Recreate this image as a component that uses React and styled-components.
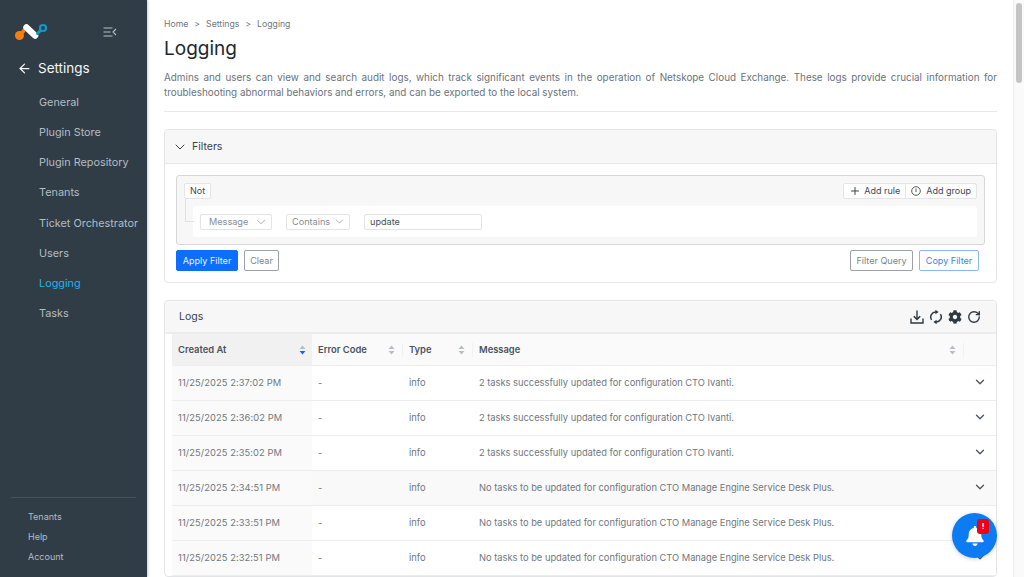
import styled, { createGlobalStyle } from "styled-components";
import { FaBell, FaCog } from "react-icons/fa";
import { LuChevronDown, LuPlus, LuArrowLeft, LuRotateCw } from "react-icons/lu";

const GlobalStyle = createGlobalStyle`
  html, body {
    margin: 0;
    height: 100%;
    overflow: hidden;
    background: #fff;
    font-family: Inter, "Liberation Sans", sans-serif;
    color: #5c6670;
  }
  * { box-sizing: border-box; }
`;

const Page = styled.div`
  display: flex;
  width: 1024px;
  height: 577px;
  overflow: hidden;
  position: relative;
`;

const Sidebar = styled.aside`
  width: 147px;
  flex: none;
  background: #303d47;
  display: flex;
  flex-direction: column;
  box-shadow: 1px 0 2px rgba(0, 0, 0, 0.2);
`;

const SideTop = styled.div`
  display: flex;
  align-items: center;
  justify-content: space-between;
  height: 54px;
  padding: 10px 30px 0 14px;
`;

const Back = styled.div`
  display: flex;
  align-items: center;
  gap: 6px;
  height: 28px;
  padding-left: 17px;
  color: #f4f6f7;
  font-size: 13.5px;
  font-weight: 400;
`;

const Nav = styled.nav`
  display: flex;
  flex-direction: column;
  margin-top: 5.2px;
  flex: 1;
`;

const NavItem = styled.div`
  height: 30.1px;
  line-height: 30px;
  padding-left: 39px;
  font-size: 10.85px;
  white-space: nowrap;
  color: ${(p) => (p.$active ? "#1fb4e8" : "#b4bcc2")};
`;

const SideFoot = styled.div`
  margin: 0 11px 10px;
  padding-top: 9px;
  border-top: 1px solid #45525c;
  display: flex;
  flex-direction: column;
`;

const FootItem = styled.div`
  height: 20px;
  line-height: 20px;
  padding-left: 17px;
  font-size: 9px;
  color: #b4bcc2;
`;

const Main = styled.main`
  flex: 1;
  min-width: 0;
  padding: 18px 16px 0 17px;
`;

const Crumbs = styled.div`
  display: flex;
  gap: 6px;
  font-size: 8.7px;
  color: #6f7880;
  height: 12px;
  line-height: 12px;
`;

const Title = styled.h1`
  margin: 6px 0 0;
  font-size: 19px;
  line-height: 26px;
  font-weight: 400;
  color: #1d2730;
`;

const Intro = styled.p`
  margin: 7.5px 0 0;
  padding-bottom: 11.5px;
  border-bottom: 1px solid #e6e8ea;
  font-size: 9.88px;
  line-height: 15px;
  text-align: justify;
  color: #6a737b;
`;

const Card = styled.section`
  margin-top: ${(p) => p.$top}px;
  border: 1px solid #e2e4e6;
  border-radius: 4px;
  background: #fff;
`;

const CardHead = styled.div`
  display: flex;
  align-items: center;
  height: ${(p) => p.$h}px;
  background: #f7f7f7;
  border-bottom: ${(p) => p.$line};
  border-radius: 4px 4px 0 0;
  padding: 0 ${(p) => p.$right}px 0 ${(p) => p.$left}px;
  gap: ${(p) => p.$gap}px;
  font-size: 10.5px;
  color: #38424b;
`;

const FilterBody = styled.div`
  padding: 11px;
`;

const QueryBox = styled.div`
  height: 70px;
  border: 1px solid #d5d7d9;
  border-radius: 3px;
  background: #f7f7f7;
  padding: 7px 7px 6px 7px;
  position: relative;
`;

const QueryTop = styled.div`
  display: flex;
  justify-content: space-between;
  align-items: flex-start;
`;

const MiniBtn = styled.div`
  display: flex;
  align-items: center;
  gap: ${(p) => p.$gap ?? 5}px;
  height: 16px;
  padding: 0 5px 1px;
  background: #fff;
  border: 1px solid #e4e5e7;
  border-radius: ${(p) => p.$radius ?? "2px"};
  margin-left: ${(p) => p.$ml ?? 0}px;
  font-size: 9px;
  color: #3f4850;
`;

const BtnGroup = styled.div`
  display: flex;
`;

const RuleRow = styled.div`
  display: flex;
  align-items: center;
  height: 31px;
  margin: 7px 0 0 9px;
  padding-left: 7px;
  background: #fff;
  border-radius: 3px;
`;

const Connector = styled.span`
  position: absolute;
  left: 8px;
  top: 22px;
  width: 9px;
  height: 24px;
  border-left: 1px solid #e0e1e3;
  border-bottom: 1px solid #e0e1e3;
`;

const Select = styled.div`
  display: flex;
  align-items: center;
  justify-content: space-between;
  width: ${(p) => p.$w}px;
  height: 16px;
  margin-right: ${(p) => p.$mr}px;
  padding: 0 3px 0 ${(p) => p.$pl}px;
  border: 1px solid #e2e3e5;
  border-radius: 2px;
  font-size: 9.15px;
  color: #868d94;
`;

const TextInput = styled.div`
  width: 118px;
  height: 16px;
  line-height: 14px;
  padding-left: 5px;
  border: 1px solid #e2e3e5;
  border-radius: 2px;
  font-size: 9.15px;
  color: #454e56;
`;

const Actions = styled.div`
  display: flex;
  align-items: center;
  margin-top: 5px;
  padding-right: 6px;
  gap: 6px;
`;

const Button = styled.div`
  display: flex;
  align-items: center;
  justify-content: center;
  width: ${(p) => p.$w}px;
  height: 21px;
  border-radius: 2px;
  font-size: 9.05px;
  border: 1px solid ${(p) => p.$border};
  background: ${(p) => p.$bg ?? "#fff"};
  color: ${(p) => p.$color};
`;

const Spacer = styled.div`
  flex: 1;
`;

const Tools = styled.div`
  display: flex;
  align-items: center;
  gap: 5px;
  color: #2f3942;
`;

const LogTable = styled.div`
  padding: 0 0 0 7px;
`;

const Row = styled.div`
  display: grid;
  grid-template-columns: 140px 91px 70px 1fr 32px;
  align-items: center;
  height: 35px;
  border-bottom: 1px solid #eceded;
  font-size: 9.3px;
  color: #6f7880;
  background: ${(p) => (p.$shade ? "#f9f9f9" : "#fff")};
`;

const HeadRow = styled(Row)`
  height: 32px;
  background: #fafafa;
  font-weight: 600;
  font-size: 9.4px;
  color: #4a535b;
`;

const HeadCell = styled.div`
  display: flex;
  align-items: center;
  justify-content: space-between;
  height: 100%;
  padding: 0 6px;
  background: ${(p) => (p.$sorted ? "#f1f1f1" : "transparent")};
`;

const HeadLabel = styled.span`
  flex: 1;
`;

const HeadRule = styled.span`
  width: 1px;
  height: 14px;
  margin: 0 -6px 0 7px;
  background: #f1f1f1;
`;

const Cell = styled.div`
  padding: 0 6px 2px;
  white-space: nowrap;
  height: 100%;
  display: flex;
  align-items: center;
  background: ${(p) => (p.$sorted ? "#fafafa" : "transparent")};
`;

const TimeCell = styled(Cell)`
  letter-spacing: 0.1px;
`;

const Toggle = styled.div`
  display: flex;
  justify-content: flex-end;
  padding: 0 9px 2px 0;
  color: #4b545c;
`;

const ScrollTrack = styled.div`
  width: 11px;
  flex: none;
  background: #fafafa;
  border-left: 1px solid #ececec;
  position: relative;
`;

const ScrollThumb = styled.div`
  position: absolute;
  top: 3px;
  left: 2px;
  width: 6px;
  height: 80px;
  border-radius: 3px;
  background: #c4c4c4;
`;

const Fab = styled.div`
  position: absolute;
  left: 952px;
  top: 513px;
  width: 45px;
  height: 45px;
  border-radius: 50%;
  background: #0d7bf2;
  display: flex;
  align-items: center;
  justify-content: center;
  color: #fff;
  box-shadow: 0 1px 4px rgba(0, 0, 0, 0.2);
`;

const FabBadge = styled.span`
  position: absolute;
  left: 25px;
  top: 6px;
  width: 12px;
  height: 15px;
  border-radius: 3px;
  background: #f00010;
  color: #fff;
  font-size: 8px;
  font-weight: 700;
  line-height: 15px;
  text-align: center;
`;

function Logo() {
  return (
    <svg width="34" height="20" viewBox="0 0 34 20" fill="none">
      <path d="M10 8.5 L6 13" stroke="#f47f10" strokeWidth="3.5" strokeLinecap="round" />
      <circle cx="5.5" cy="13.5" r="4.5" fill="#f47f10" />
      <path d="M12.5 5.5 L21 13.5" stroke="#fff" strokeWidth="6.5" strokeLinecap="round" />
      <path d="M23.5 11.5 L28 7" stroke="#0f9ac6" strokeWidth="3" strokeLinecap="round" />
      <circle cx="29" cy="6" r="3" stroke="#0f9ac6" strokeWidth="2.2" fill="#303d47" />
    </svg>
  );
}

function CollapseIcon() {
  return (
    <svg width="14" height="10" viewBox="0 0 14 10" fill="none" stroke="#b8bfc4" strokeWidth="1.1">
      <path d="M0.5 1h9M0.5 5h7M0.5 9h9M13 2 L10 5 L13 8" />
    </svg>
  );
}

function ExportIcon() {
  return (
    <svg width="14" height="14" viewBox="0 0 14 14" fill="none" stroke="currentColor" strokeWidth="1.4">
      <path d="M1 8.5V13H13V8.5" />
      <path d="M7 0.5V9" />
      <path d="M3.8 6.2 L7 9.4 L10.2 6.2" strokeWidth="1.6" />
    </svg>
  );
}

function SyncIcon() {
  return (
    <svg width="14" height="14" viewBox="0 0 14 14" fill="none" stroke="currentColor" strokeWidth="1.5">
      <path d="M2.6 9.8 A5 5 0 0 1 7 2" />
      <path d="M11.4 4.2 A5 5 0 0 1 7 12" />
      <path d="M6.4 -0.2 L9.6 2 L6.4 4.2 Z" fill="currentColor" stroke="none" />
      <path d="M7.6 9.8 L4.4 12 L7.6 14.2 Z" fill="currentColor" stroke="none" />
    </svg>
  );
}

function GroupIcon() {
  return (
    <svg width="10" height="10" viewBox="0 0 10 10" fill="none" stroke="#3f4850" strokeWidth="0.9">
      <circle cx="5" cy="5" r="4.3" />
      <path d="M5 2.5v3.5" />
    </svg>
  );
}

function SortIcon({ active }) {
  return (
    <svg width="7" height="10" viewBox="0 0 7 10">
      <path d="M3.5 0.5 L6.5 4 H0.5 Z" fill="#b9bdc1" />
      <path d="M3.5 9.5 L6.5 6 H0.5 Z" fill={active ? "#1668e3" : "#b9bdc1"} />
    </svg>
  );
}

const NAV = ["General", "Plugin Store", "Plugin Repository", "Tenants", "Ticket Orchestrator", "Users", "Logging", "Tasks"];

const CTO_IVANTI = "2 tasks successfully updated for configuration CTO Ivanti.";
const CTO_MANAGE = "No tasks to be updated for configuration CTO Manage Engine Service Desk Plus.";

const LOGS = [
  ["11/25/2025 2:37:02 PM", CTO_IVANTI],
  ["11/25/2025 2:36:02 PM", CTO_IVANTI],
  ["11/25/2025 2:35:02 PM", CTO_IVANTI],
  ["11/25/2025 2:34:51 PM", CTO_MANAGE],
  ["11/25/2025 2:33:51 PM", CTO_MANAGE],
  ["11/25/2025 2:32:51 PM", CTO_MANAGE],
];

export default function App() {
  return (
    <Page>
      <GlobalStyle />
      <Sidebar>
        <SideTop>
          <Logo />
          <CollapseIcon />
        </SideTop>
        <Back>
          <LuArrowLeft size={15} />
          Settings
        </Back>
        <Nav>
          {NAV.map((item) => (
            <NavItem key={item} $active={item === "Logging"}>
              {item}
            </NavItem>
          ))}
        </Nav>
        <SideFoot>
          <FootItem>Tenants</FootItem>
          <FootItem>Help</FootItem>
          <FootItem>Account</FootItem>
        </SideFoot>
      </Sidebar>

      <Main>
        <Crumbs>
          <span>Home</span>
          <span>&gt;</span>
          <span>Settings</span>
          <span>&gt;</span>
          <span>Logging</span>
        </Crumbs>
        <Title>Logging</Title>
        <Intro>
          Admins and users can view and search audit logs, which track significant events in the operation of Netskope
          Cloud Exchange. These logs provide crucial information for troubleshooting abnormal behaviors and errors, and
          can be exported to the local system.
        </Intro>

        <Card $top={17}>
          <CardHead $h={34} $left={7} $right={10} $gap={4} $line="1px solid #e6e7e9">
            <LuChevronDown size={16} strokeWidth={1.5} />
            Filters
          </CardHead>
          <FilterBody>
            <QueryBox>
              <Connector />
              <QueryTop>
                <MiniBtn>Not</MiniBtn>
                <BtnGroup>
                  <MiniBtn $radius="2px 0 0 2px" $gap={3}>
                    <LuPlus size={12} />
                    Add rule
                  </MiniBtn>
                  <MiniBtn $radius="0 2px 2px 0" $ml={-1}>
                    <GroupIcon />
                    Add group
                  </MiniBtn>
                </BtnGroup>
              </QueryTop>
              <RuleRow>
                <Select $w={72} $mr={14} $pl={8}>
                  Message
                  <LuChevronDown size={14} strokeWidth={1.2} />
                </Select>
                <Select $w={64} $mr={14} $pl={5}>
                  Contains
                  <LuChevronDown size={13} strokeWidth={1.2} />
                </Select>
                <TextInput>update</TextInput>
              </RuleRow>
            </QueryBox>
            <Actions>
              <Button $w={62} $bg="#0d6efd" $border="#0d6efd" $color="#eaf2ff">
                Apply Filter
              </Button>
              <Button $w={35} $border="#9ba1a6" $color="#7d858c">
                Clear
              </Button>
              <Spacer />
              <Button $w={63} $border="#9ba1a6" $color="#7d858c">
                Filter Query
              </Button>
              <Button $w={60} $border="#8ab6fb" $color="#3d84f5">
                Copy Filter
              </Button>
            </Actions>
          </FilterBody>
        </Card>

        <Card $top={17}>
          <CardHead $h={33} $left={14} $right={15} $gap={9} $line="2px solid #ececec">
            Logs
            <Spacer />
            <Tools>
              <ExportIcon />
              <SyncIcon />
              <FaCog size={14} />
              <LuRotateCw size={14} strokeWidth={2.4} />
            </Tools>
          </CardHead>
          <LogTable>
            <HeadRow>
              <HeadCell $sorted>
                <HeadLabel>Created At</HeadLabel>
                <SortIcon active />
              </HeadCell>
              <HeadCell>
                <HeadLabel>Error Code</HeadLabel>
                <SortIcon />
                <HeadRule />
              </HeadCell>
              <HeadCell>
                <HeadLabel>Type</HeadLabel>
                <SortIcon />
                <HeadRule />
              </HeadCell>
              <HeadCell>
                <HeadLabel>Message</HeadLabel>
                <SortIcon />
                <HeadRule />
              </HeadCell>
              <span />
            </HeadRow>
            {LOGS.map(([time, message], index) => (
              <Row key={time} $shade={index === 3}>
                <TimeCell $sorted>{time}</TimeCell>
                <Cell>-</Cell>
                <Cell>info</Cell>
                <Cell>{message}</Cell>
                <Toggle>
                  <LuChevronDown size={14} strokeWidth={2.2} />
                </Toggle>
              </Row>
            ))}
          </LogTable>
        </Card>
      </Main>

      <ScrollTrack>
        <ScrollThumb />
      </ScrollTrack>

      <Fab>
        <FaBell size={20} />
        <FabBadge>!</FabBadge>
      </Fab>
    </Page>
  );
}
